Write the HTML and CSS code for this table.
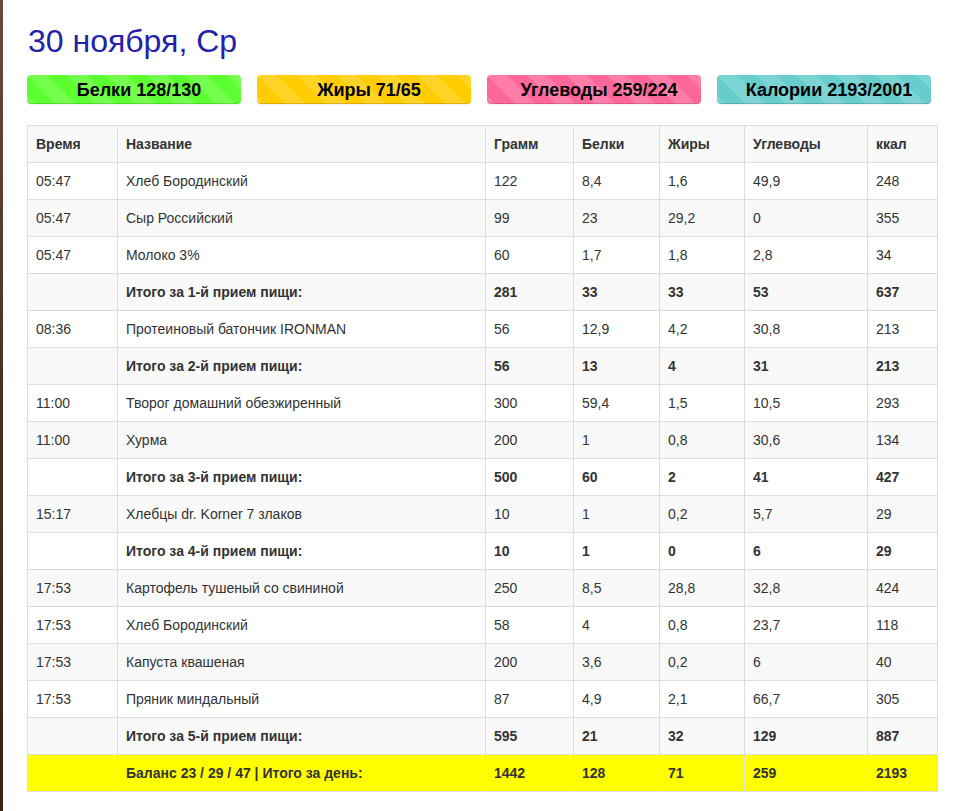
FILE: index.html
```html
<!DOCTYPE html>
<html lang="ru">
<head>
<meta charset="utf-8">
<title>30 ноября, Ср</title>
<link rel="stylesheet" href="styles.css">
</head>
<body>
<div class="page">
  <h1 class="day-title">30 ноября, Ср</h1>
  <div class="bars">
    <div class="bar bar-green">Белки 128/130</div>
    <div class="bar bar-yellow">Жиры 71/65</div>
    <div class="bar bar-pink">Углеводы 259/224</div>
    <div class="bar bar-teal">Калории 2193/2001</div>
  </div>
  <table class="food">
    <colgroup>
      <col class="c-time"><col class="c-name"><col class="c-g"><col class="c-p"><col class="c-f"><col class="c-c"><col class="c-k">
    </colgroup>
    <tbody>
      <tr class="head"><td>Время</td><td>Название</td><td>Грамм</td><td>Белки</td><td>Жиры</td><td>Углеводы</td><td>ккал</td></tr>
      <tr><td>05:47</td><td>Хлеб Бородинский</td><td>122</td><td>8,4</td><td>1,6</td><td>49,9</td><td>248</td></tr>
      <tr><td>05:47</td><td>Сыр Российский</td><td>99</td><td>23</td><td>29,2</td><td>0</td><td>355</td></tr>
      <tr><td>05:47</td><td>Молоко 3%</td><td>60</td><td>1,7</td><td>1,8</td><td>2,8</td><td>34</td></tr>
      <tr class="total"><td></td><td>Итого за 1-й прием пищи:</td><td>281</td><td>33</td><td>33</td><td>53</td><td>637</td></tr>
      <tr><td>08:36</td><td>Протеиновый батончик IRONMAN</td><td>56</td><td>12,9</td><td>4,2</td><td>30,8</td><td>213</td></tr>
      <tr class="total"><td></td><td>Итого за 2-й прием пищи:</td><td>56</td><td>13</td><td>4</td><td>31</td><td>213</td></tr>
      <tr><td>11:00</td><td>Творог домашний обезжиренный</td><td>300</td><td>59,4</td><td>1,5</td><td>10,5</td><td>293</td></tr>
      <tr><td>11:00</td><td>Хурма</td><td>200</td><td>1</td><td>0,8</td><td>30,6</td><td>134</td></tr>
      <tr class="total"><td></td><td>Итого за 3-й прием пищи:</td><td>500</td><td>60</td><td>2</td><td>41</td><td>427</td></tr>
      <tr><td>15:17</td><td>Хлебцы dr. Korner 7 злаков</td><td>10</td><td>1</td><td>0,2</td><td>5,7</td><td>29</td></tr>
      <tr class="total"><td></td><td>Итого за 4-й прием пищи:</td><td>10</td><td>1</td><td>0</td><td>6</td><td>29</td></tr>
      <tr><td>17:53</td><td>Картофель тушеный со свининой</td><td>250</td><td>8,5</td><td>28,8</td><td>32,8</td><td>424</td></tr>
      <tr><td>17:53</td><td>Хлеб Бородинский</td><td>58</td><td>4</td><td>0,8</td><td>23,7</td><td>118</td></tr>
      <tr><td>17:53</td><td>Капуста квашеная</td><td>200</td><td>3,6</td><td>0,2</td><td>6</td><td>40</td></tr>
      <tr><td>17:53</td><td>Пряник миндальный</td><td>87</td><td>4,9</td><td>2,1</td><td>66,7</td><td>305</td></tr>
      <tr class="total"><td></td><td>Итого за 5-й прием пищи:</td><td>595</td><td>21</td><td>32</td><td>129</td><td>887</td></tr>
      <tr class="total day"><td></td><td>Баланс 23 / 29 / 47 | Итого за день:</td><td>1442</td><td>128</td><td>71</td><td>259</td><td>2193</td></tr>
    </tbody>
  </table>
</div>
</body>
</html>
```
FILE: styles.css
```css
html, body {
  margin: 0;
  padding: 0;
}
body {
  background: linear-gradient(180deg, #6a4a38 0%, #4a3020 50%, #3a2214 100%);
  font-family: "Liberation Sans", Arial, Helvetica, sans-serif;
  font-size: 14px;
  line-height: 20px;
  color: #333;
}
.page {
  margin-left: 3px;
  background: #fff;
  min-height: 811px;
  padding: 24px 15px 20px 24px;
  box-sizing: border-box;
}
.day-title {
  margin: 0 0 16px 1px;
  font-size: 32px;
  line-height: 35px;
  font-weight: normal;
  color: #2222aa;
}
.bars {
  display: flex;
  gap: 16px;
  margin-bottom: 21px;
}
.bar {
  width: 214px;
  height: 29px;
  box-sizing: border-box;
  padding-left: 10px;
  border-radius: 4px;
  display: flex;
  align-items: center;
  justify-content: center;
  font-weight: bold;
  font-size: 18px;
  color: #000;
  background-image: linear-gradient(45deg, rgba(255,255,255,.15) 25%, transparent 25%, transparent 50%, rgba(255,255,255,.15) 50%, rgba(255,255,255,.15) 75%, transparent 75%, transparent);
  background-size: 40px 40px;
  box-shadow: inset 0 -1px 0 rgba(0,0,0,.15), 0 1px 1px rgba(0,0,0,.06);
}
.bar-green { background-color: #5cff30; }
.bar-yellow { background-color: #ffcc00; }
.bar-pink { background-color: #ff6699; }
.bar-teal { background-color: #66cccc; }

.food {
  border-collapse: collapse;
  table-layout: fixed;
  width: 910px;
}
.c-time { width: 90px; }
.c-name { width: 368px; }
.c-g { width: 88px; }
.c-p { width: 86px; }
.c-f { width: 85px; }
.c-c { width: 123px; }
.c-k { width: 70px; }
.food td {
  border: 1px solid #ddd;
  padding: 8px;
  line-height: 20px;
  vertical-align: top;
  white-space: nowrap;
}
.food tr:nth-child(odd) td {
  background: #f9f9f9;
}
.food tr.head td,
.food tr.total td {
  font-weight: bold;
}
.food tr.day td {
  background: #ffff00;
}
```
